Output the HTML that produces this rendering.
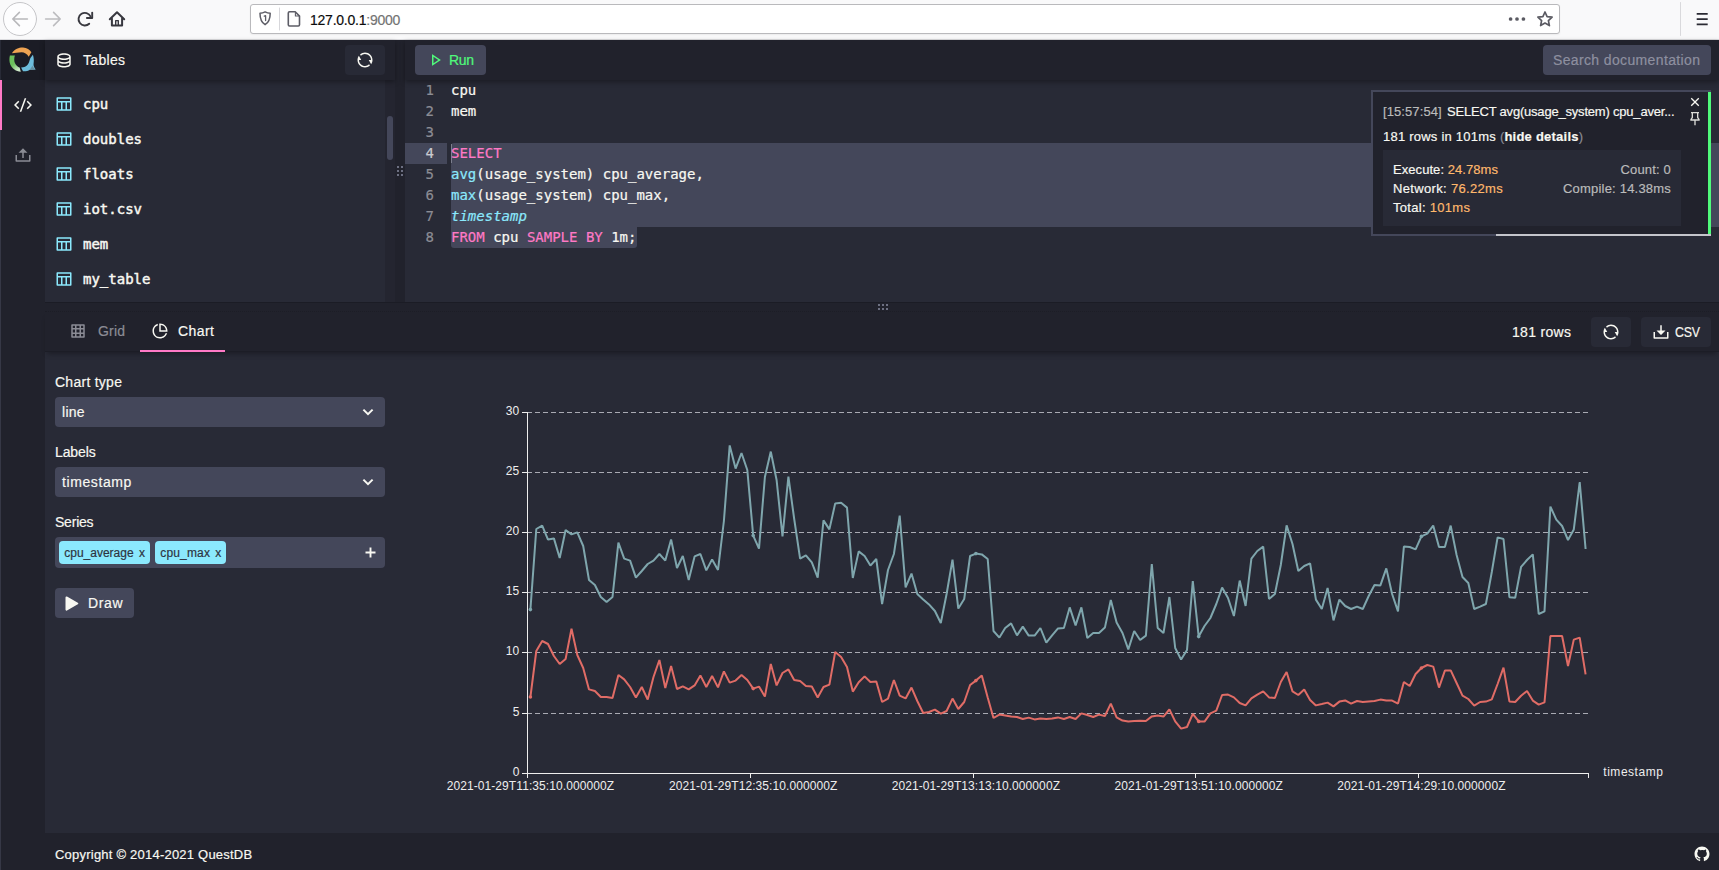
<!DOCTYPE html>
<html lang="en">
<head>
<meta charset="utf-8">
<title>QuestDB · Console</title>
<style>
*{box-sizing:border-box;margin:0;padding:0}
html,body{width:1719px;height:870px;overflow:hidden;background:#282a36}
body{position:relative;font-family:"Liberation Sans",sans-serif;font-size:14px;color:#f8f8f2;letter-spacing:.25px;-webkit-text-stroke:.18px}
.abs{position:absolute}
.mono{font-family:"DejaVu Sans Mono","Liberation Mono",monospace;letter-spacing:0}
svg{display:block;position:absolute;overflow:visible}
/* ---------- browser chrome ---------- */
#chrome{position:absolute;left:0;top:0;width:1719px;height:40px;background:#f9f9fa;border-bottom:1px solid #dcdcdf;color:#0c0c0d;letter-spacing:0}
#urlbar{position:absolute;left:250px;top:4px;width:1310px;height:30px;background:#fff;border:1px solid #b9b9bc;border-radius:3px;box-shadow:0 1px 2px rgba(0,0,0,.06)}
#url{position:absolute;left:310px;top:12px;font-size:14px;line-height:16px;color:#0c0c0d;white-space:nowrap}
#url span{color:#737373}
/* ---------- app frame ---------- */
#sidebar{left:0;top:40px;width:45px;height:830px;background:#21222c}
#logo{left:0;top:40px;width:45px;height:40px;background:#1b1c25}
#navsel{left:0;top:80px;width:2px;height:50px;background:#ff79c6}
#thead{left:45px;top:40px;width:350px;height:40px;background:#21222c;box-shadow:0 2px 5px rgba(0,0,0,.35);z-index:3}
#tlist{left:45px;top:80px;width:340px;height:222px;background:#282a36;overflow:hidden}
#tscroll{left:385px;top:80px;width:10px;height:222px;background:#242530}
#tthumb{left:387px;top:116px;width:6px;height:44px;background:#44475a;border-radius:3px}
#vsplit{left:395px;top:40px;width:10px;height:262px;background:#21222c}
#ehead{left:405px;top:40px;width:1314px;height:40px;background:#21222c;box-shadow:0 2px 5px rgba(0,0,0,.35);z-index:3}
#editor{left:405px;top:80px;width:1314px;height:222px;background:#282a36;overflow:hidden}
#hsplit{left:45px;top:302px;width:1674px;height:10px;background:#21222c}
#tabs{left:45px;top:312px;width:1674px;height:40px;background:#21222c;box-shadow:0 4px 5px -2px rgba(0,0,0,.3),inset 0 -1px 0 #1c1d26;z-index:3}
#result{left:45px;top:352px;width:1674px;height:481px;background:#282a36}
#footer{left:0;top:833px;width:1719px;height:37px;background:#21222c}
#handles i{position:absolute;width:2px;height:2px;background:#6d7082;z-index:4}
.btn{position:absolute;border-radius:4px;background:#282a36}
.trow{position:absolute;left:83px;font-size:14px;line-height:20px;white-space:nowrap;-webkit-text-stroke:.45px #f8f8f2}
.ln{position:absolute;left:405px;width:29px;text-align:right;color:#8c8d95;font-size:14px;line-height:21px}
.cl{position:absolute;left:451px;font-size:14px;line-height:21px;white-space:pre;color:#f8f8f2;-webkit-text-stroke:.2px}
.k{color:#ff79c6}.f{color:#8be9fd}.i{color:#8be9fd;font-style:italic}
.lab{position:absolute;left:55px;font-size:14px;line-height:20px;white-space:nowrap}
.sel{position:absolute;left:55px;width:330px;height:30px;background:#44475a;border-radius:4px}
.sel span{position:absolute;left:7px;top:5px;line-height:20px;font-size:14px}
.tag{position:absolute;top:541px;height:23px;background:#8be9fd;border-radius:4px}
.tagt{position:absolute;top:542px;color:#2d3340;font-size:12px;line-height:22px;white-space:nowrap;letter-spacing:.2px}
</style>
</head>
<body>
<!-- ================= BROWSER CHROME ================= -->
<div id="chrome">
  <div id="urlbar"></div>
  <svg id="chromeicons" style="left:0;top:0" width="1719" height="40" viewBox="0 0 1719 40" fill="none" stroke-linecap="round" stroke-linejoin="round">
    <circle cx="20" cy="19" r="16.5" fill="#fdfdfe" stroke="#c6c6c9" stroke-width="1"/>
    <path d="M27.4 19H12.8M19.4 12.4L12.8 19l6.6 6.6" stroke="#b8b8bb" stroke-width="1.6"/>
    <path d="M45.6 19H60.2M53.6 12.4L60.2 19l-6.6 6.6" stroke="#bcbcbf" stroke-width="1.6"/>
    <path d="M90.5 16.4A6.3 6.3 0 1 0 89.2 23.7" stroke="#38383f" stroke-width="1.9"/>
    <path d="M92.2 12.6V18H86.9" stroke="#38383f" stroke-width="1.9"/>
    <path d="M109.8 19.3L117 12.2l7.2 7.1" stroke="#38383f" stroke-width="2"/>
    <path d="M111.9 18.6V25.6H122.1V18.6" stroke="#38383f" stroke-width="2"/>
    <path d="M115.7 25.4V20.6h2.6v4.8" stroke="#38383f" stroke-width="1.4"/>
    <path d="M260 13.2c1.8 0 3.6-.5 5.100-1.300 1.500.8 3.300 1.300 5.100 1.300 0 5.600-1.600 9.400-5.100 11.500-3.500-2.100-5.100-5.900-5.100-11.500z" stroke="#5d5d66" stroke-width="1.5"/>
    <path d="M264.300 16.200l1.300-.5v4.800" stroke="#5d5d66" stroke-width="1.300"/>
    <path d="M279.500 8V30" stroke="#d7d7db" stroke-width="1"/>
    <path d="M289.500 11.800h5.700l4.300 4.300v8.700a1.200 1.200 0 0 1-1.200 1.200h-8.800a1.200 1.200 0 0 1-1.200-1.200V13a1.200 1.200 0 0 1 1.200-1.200z" stroke="#5d5d66" stroke-width="1.600"/>
    <path d="M295.400 12.200v3.800h3.800" stroke="#5d5d66" stroke-width="1.100"/>
    <g fill="#5a5a62" stroke="none"><circle cx="1510.600" cy="19" r="1.850"/><circle cx="1517" cy="19" r="1.850"/><circle cx="1523.400" cy="19" r="1.850"/></g>
    <path d="M1545 12l2.100 4.600 5 .6-3.700 3.400 1 5-4.400-2.500-4.400 2.500 1-5-3.700-3.400 5-.6z" stroke="#5a5a62" stroke-width="1.700"/>
    <path d="M1680.500 2.500V35.500" stroke="#d9d9dc" stroke-width="1"/>
    <path d="M1696.700 13.800h11M1696.700 19.100h11M1696.700 24.400h11" stroke="#2a2a33" stroke-width="1.700" stroke-linecap="butt"/>
  </svg>
  <div id="url" style="letter-spacing:-0.24px">127.0.0.1<span>:9000</span></div>
</div>

<!-- ================= APP ================= -->
<div class="abs" id="sidebar"></div>
<div class="abs" id="logo"></div>
<svg style="left:0;top:40px;z-index:2" width="45" height="40" viewBox="0 40 45 40">
  <defs><linearGradient id="lg" x1="0" y1="0" x2="0.600" y2="1"><stop offset="0.550" stop-color="#6cc05c"/><stop offset="1" stop-color="#cfe9c9"/></linearGradient></defs>
  <path fill="#eea352" d="M11.900 53.200C14.800 48.800 19.500 47.300 23 47.500c3.800.300 6.900 2.300 8.400 4.700L28.700 56.800C27.100 53.700 24.300 52.300 21.600 52.200c-3.400 0-6.800 1-9.700 1z"/>
  <path fill="url(#lg)" d="M9.900 55.600l5-.2c-.9 2.600-.9 5.600.1 7.800 1 2.100 2.900 3.800 4.600 4.400l1.200 4.200C16 71.500 12 68.500 10.300 64.500 9.200 61.700 9.200 58.500 9.900 55.600z"/>
  <path fill="#6dbddc" d="M32.900 54.700c1 2.800 1.100 6.300.700 8.800-.2 1.500 0 3 2 5.900l-5.600.4c-2 1.200-4.500 1.700-7 1.500l-1.900-3.700c2.900-.2 5.400-1.400 6.700-3.200 1.500-2.100 1.800-4.400 2.600-6.500z"/>
  <path fill="#6790a1" d="M32.300 65.600c.5 1.300 1.600 2.600 3.300 3.800l-6.200.5c1.300-1.100 2.300-2.600 2.900-4.300z"/>
</svg>
<div class="abs" style="left:0;top:130px;width:1px;height:740px;background:#363846;z-index:2"></div>
<div class="abs" style="left:0;top:40px;width:1px;height:40px;background:#282a36;z-index:3"></div>
<div class="abs" id="navsel" style="z-index:3"></div>
<svg style="left:14px;top:96px;z-index:2" width="18" height="18" viewBox="0 0 24 24"><path fill="#f8f8f2" d="M24 12l-5.657 5.657-1.414-1.414L21.172 12l-4.243-4.243 1.414-1.414L24 12zM2.828 12l4.243 4.243-1.414 1.414L0 12l5.657-5.657L7.07 7.757 2.828 12zm6.96 9H7.66l6.552-18h2.128L9.788 21z"/></svg>
<svg style="left:14px;top:146px;z-index:2" width="18" height="18" viewBox="0 0 24 24"><path fill="#8b8c95" d="M4 19h16v-7h2v8a1 1 0 0 1-1 1H3a1 1 0 0 1-1-1v-8h2v7zm9-10v7h-2V9H6l6-6 6 6h-5z"/></svg>

<div class="abs" id="thead">
  <svg style="left:10px;top:11px" width="18" height="18" viewBox="0 0 24 24"><path fill="#f8f8f2" d="M5 12.5c0 .313.461.858 1.53 1.393C7.914 14.585 9.877 15 12 15c2.123 0 4.086-.415 5.47-1.107 1.069-.535 1.53-1.08 1.53-1.393v-2.171C17.35 11.349 14.827 12 12 12s-5.35-.652-7-1.671V12.5zm14 2.829C17.35 16.349 14.827 17 12 17s-5.35-.652-7-1.671V17.5c0 .313.461.858 1.53 1.393C7.914 19.585 9.877 20 12 20c2.123 0 4.086-.415 5.47-1.107 1.069-.535 1.53-1.08 1.53-1.393v-2.171zM3 17.5v-10C3 5.015 7.03 3 12 3s9 2.015 9 4.5v10c0 2.485-4.03 4.5-9 4.5s-9-2.015-9-4.5zm9-7.5c2.123 0 4.086-.415 5.47-1.107C18.539 8.358 19 7.813 19 7.5c0-.313-.461-.858-1.53-1.393C16.086 5.415 14.123 5 12 5c-2.123 0-4.086.415-5.47 1.107C5.461 6.642 5 7.187 5 7.5c0 .313.461.858 1.53 1.393C7.914 9.585 9.877 10 12 10z"/></svg>
  <div class="abs" id="h-tables" style="left:38px;top:10px;line-height:20px;font-size:14px;letter-spacing:0.30px">Tables</div>
  <div class="btn" style="left:300px;top:5px;width:40px;height:30px"></div>
  <svg style="left:311px;top:11px" width="18" height="18" viewBox="0 0 24 24"><path fill="#f8f8f2" d="M5.463 4.433A9.961 9.961 0 0 1 12 2c5.523 0 10 4.477 10 10 0 2.136-.67 4.116-1.81 5.74L17 12h3A8 8 0 0 0 6.46 6.228l-.997-1.795zm13.074 15.134A9.961 9.961 0 0 1 12 22C6.477 22 2 17.523 2 12c0-2.136.67-4.116 1.81-5.74L7 12H4a8 8 0 0 0 13.54 5.772l.997 1.795z"/></svg>
</div>
<div class="abs" id="tlist">
  <svg style="left:9.5px;top:15px" width="18" height="18" viewBox="0 0 24 24"><path fill="#8be9fd" d="M4 8h16V5H4v3zm10 11v-9h-4v9h4zm2 0h4v-9h-4v9zm-8 0v-9H4v9h4zM3 3h18a1 1 0 0 1 1 1v16a1 1 0 0 1-1 1H3a1 1 0 0 1-1-1V4a1 1 0 0 1 1-1z"/></svg>
  <div class="trow mono" style="left:38px;top:14px">cpu</div>
  <svg style="left:9.5px;top:50px" width="18" height="18" viewBox="0 0 24 24"><path fill="#8be9fd" d="M4 8h16V5H4v3zm10 11v-9h-4v9h4zm2 0h4v-9h-4v9zm-8 0v-9H4v9h4zM3 3h18a1 1 0 0 1 1 1v16a1 1 0 0 1-1 1H3a1 1 0 0 1-1-1V4a1 1 0 0 1 1-1z"/></svg>
  <div class="trow mono" style="left:38px;top:49px">doubles</div>
  <svg style="left:9.5px;top:85px" width="18" height="18" viewBox="0 0 24 24"><path fill="#8be9fd" d="M4 8h16V5H4v3zm10 11v-9h-4v9h4zm2 0h4v-9h-4v9zm-8 0v-9H4v9h4zM3 3h18a1 1 0 0 1 1 1v16a1 1 0 0 1-1 1H3a1 1 0 0 1-1-1V4a1 1 0 0 1 1-1z"/></svg>
  <div class="trow mono" style="left:38px;top:84px">floats</div>
  <svg style="left:9.5px;top:120px" width="18" height="18" viewBox="0 0 24 24"><path fill="#8be9fd" d="M4 8h16V5H4v3zm10 11v-9h-4v9h4zm2 0h4v-9h-4v9zm-8 0v-9H4v9h4zM3 3h18a1 1 0 0 1 1 1v16a1 1 0 0 1-1 1H3a1 1 0 0 1-1-1V4a1 1 0 0 1 1-1z"/></svg>
  <div class="trow mono" style="left:38px;top:119px">iot.csv</div>
  <svg style="left:9.5px;top:155px" width="18" height="18" viewBox="0 0 24 24"><path fill="#8be9fd" d="M4 8h16V5H4v3zm10 11v-9h-4v9h4zm2 0h4v-9h-4v9zm-8 0v-9H4v9h4zM3 3h18a1 1 0 0 1 1 1v16a1 1 0 0 1-1 1H3a1 1 0 0 1-1-1V4a1 1 0 0 1 1-1z"/></svg>
  <div class="trow mono" style="left:38px;top:154px">mem</div>
  <svg style="left:9.5px;top:190px" width="18" height="18" viewBox="0 0 24 24"><path fill="#8be9fd" d="M4 8h16V5H4v3zm10 11v-9h-4v9h4zm2 0h4v-9h-4v9zm-8 0v-9H4v9h4zM3 3h18a1 1 0 0 1 1 1v16a1 1 0 0 1-1 1H3a1 1 0 0 1-1-1V4a1 1 0 0 1 1-1z"/></svg>
  <div class="trow mono" style="left:38px;top:189px">my_table</div>
</div>
<div class="abs" id="tscroll"></div>
<div class="abs" id="tthumb"></div>
<div class="abs" id="vsplit"></div>
<div id="handles"><i style="left:397px;top:166px"></i><i style="left:401px;top:166px"></i><i style="left:397px;top:170px"></i><i style="left:401px;top:170px"></i><i style="left:397px;top:174px"></i><i style="left:401px;top:174px"></i><i style="left:878px;top:304px"></i><i style="left:882px;top:304px"></i><i style="left:886px;top:304px"></i><i style="left:878px;top:308px"></i><i style="left:882px;top:308px"></i><i style="left:886px;top:308px"></i></div>

<div class="abs" id="ehead">
  <div class="btn" style="left:10px;top:5px;width:71px;height:30px;background:#44475a"></div>
  <svg style="left:21px;top:11px" width="18" height="18" viewBox="0 0 24 24"><path fill="#50fa7b" d="M16.394 12L10 7.737v8.526L16.394 12zm2.982.416L8.777 19.482A.5.5 0 0 1 8 19.066V4.934a.5.5 0 0 1 .777-.416l10.599 7.066a.5.5 0 0 1 0 .832z"/></svg>
  <div class="abs" id="h-run" style="left:44px;top:10px;line-height:20px;font-size:14px;color:#50fa7b;letter-spacing:-0.35px">Run</div>
  <div class="btn" style="left:1138px;top:5px;width:168px;height:30px;background:#44475a"></div>
  <div class="abs" id="h-search" style="left:1148px;top:10px;line-height:20px;font-size:14px;color:#8e90a0;white-space:nowrap;letter-spacing:0.36px">Search documentation</div>
</div>
<div class="abs" id="editor">
  <div class="abs" style="left:0;top:63px;width:42px;height:21px;background:#44475a"></div>
  <div class="abs" style="left:46px;top:63px;width:1268px;height:84px;background:#44475a;border-radius:3px 0 0 0"></div>
  <div class="abs" style="left:46px;top:147px;width:186px;height:21px;background:#44475a;border-radius:0 0 3px 3px"></div>
  <div class="abs" style="left:46px;top:64px;width:1px;height:19px;background:#7d7f8e"></div>
  <div class="ln mono" style="left:0;top:0px;color:#8c8d95">1</div>
  <div class="cl mono" style="left:46px;top:0px">cpu</div>
  <div class="ln mono" style="left:0;top:21px;color:#8c8d95">2</div>
  <div class="cl mono" style="left:46px;top:21px">mem</div>
  <div class="ln mono" style="left:0;top:42px;color:#8c8d95">3</div>
  <div class="ln mono" style="left:0;top:63px;color:#c9cad0">4</div>
  <div class="cl mono" style="left:46px;top:63px"><span class="k">SELECT</span></div>
  <div class="ln mono" style="left:0;top:84px;color:#8c8d95">5</div>
  <div class="cl mono" style="left:46px;top:84px"><span class="f">avg</span>(usage_system) cpu_average,</div>
  <div class="ln mono" style="left:0;top:105px;color:#8c8d95">6</div>
  <div class="cl mono" style="left:46px;top:105px"><span class="f">max</span>(usage_system) cpu_max,</div>
  <div class="ln mono" style="left:0;top:126px;color:#8c8d95">7</div>
  <div class="cl mono" style="left:46px;top:126px"><span class="i">timestamp</span></div>
  <div class="ln mono" style="left:0;top:147px;color:#8c8d95">8</div>
  <div class="cl mono" style="left:46px;top:147px"><span class="k">FROM</span> cpu <span class="k">SAMPLE</span> <span class="k">BY</span> 1m;</div>
</div>

<!-- ================= NOTIFICATION ================= -->
<div class="abs" id="notif" style="left:1371px;top:90px;width:340px;height:146px;background:#21222c;border:2px solid #44475a;border-right:0;z-index:5;font-size:13px;line-height:19px;letter-spacing:.2px;white-space:nowrap">
  <div class="abs" style="right:0;top:0;width:3px;height:142px;background:#50fa7b"></div>
  <div class="abs" style="left:123px;top:142px;width:215px;height:2px;background:#c4c5cb"></div>
  <div class="abs" id="n-time" style="left:10px;top:10px;color:#bbbbbb;letter-spacing:0.09px">[15:57:54]</div>
  <div class="abs" id="n-query" style="left:74px;top:10px;letter-spacing:-0.20px">SELECT avg(usage_system) cpu_aver...</div>
  <div class="abs" id="n-rows" style="left:10px;top:35px;letter-spacing:0.23px">181 rows in 101ms <span style="color:#8b8c95">(</span><b>hide details</b><span style="color:#8b8c95">)</span></div>
  <div class="abs" style="left:10px;top:58px;width:298px;height:76px;background:#282a36"></div>
  <div class="abs" id="n-ex" style="left:20px;top:68px;letter-spacing:0.06px">Execute: <span style="color:#ffb86c">24.78ms</span></div>
  <div class="abs" id="n-nw" style="left:20px;top:87px;letter-spacing:0.33px">Network: <span style="color:#ffb86c">76.22ms</span></div>
  <div class="abs" id="n-to" style="left:20px;top:106px;letter-spacing:0.29px">Total: <span style="color:#ffb86c">101ms</span></div>
  <div class="abs" id="n-co" style="right:40px;top:68px;color:#bbbbbb;letter-spacing:0.18px">Count: 0</div>
  <div class="abs" id="n-cm" style="right:40px;top:87px;color:#bbbbbb;letter-spacing:0.20px">Compile: 14.38ms</div>
  <svg style="left:314px;top:2px" width="16" height="16" viewBox="0 0 24 24"><path fill="#f8f8f2" d="M12 10.586l4.95-4.95 1.414 1.414-4.95 4.95 4.95 4.95-1.414 1.414-4.95-4.95-4.95 4.95-1.414-1.414 4.95-4.95-4.95-4.95L7.05 5.636z"/></svg>
  <svg style="left:314px;top:17.500px" width="16" height="16" viewBox="0 0 24 24"><path fill="#dcdcd8" d="M18 3v2h-1v6l2 3v2h-6v7h-2v-7H5v-2l2-3V5H6V3h12zM9 5v6.606L7.404 14h9.192L15 11.606V5H9z"/></svg>
</div>
<div class="abs" id="hsplit"></div>
<div class="abs" style="left:45px;top:302px;width:1674px;height:1px;background:#1b1c25"></div>
<div class="abs" style="left:45px;top:311px;width:1674px;height:0;border-top:1px dotted #1c1d26;z-index:4"></div>
<div class="abs" id="tabs">
  <svg style="left:24px;top:10px" width="18" height="18" viewBox="0 0 24 24"><path fill="#8b8c95" d="M14 10h-4v4h4v-4zm2 0v4h3v-4h-3zm-2 9v-3h-4v3h4zm2 0h3v-3h-3v3zM14 5h-4v3h4V5zm2 0v3h3V5h-3zm-8 5H5v4h3v-4zm0 9v-3H5v3h3zM8 5H5v3h3V5zM4 3h16a1 1 0 0 1 1 1v16a1 1 0 0 1-1 1H4a1 1 0 0 1-1-1V4a1 1 0 0 1 1-1z"/></svg>
  <div class="abs" id="t-grid" style="left:53px;top:9px;line-height:20px;font-size:14px;color:#8b8c95;letter-spacing:0.18px">Grid</div>
  <svg style="left:106px;top:10px" width="18" height="18" viewBox="0 0 24 24"><path fill="#f8f8f2" d="M9 2.458v2.124A8.003 8.003 0 0 0 12 20a8.003 8.003 0 0 0 7.419-5h2.123c-1.274 4.057-5.064 7-9.542 7-5.523 0-10-4.477-10-10 0-4.478 2.943-8.268 7-9.542zM12 2c5.523 0 10 4.477 10 10 0 .338-.017.67-.05 1H11V2.05c.329-.033.663-.05 1-.05zm1 2.062V11h6.938A8.004 8.004 0 0 0 13 4.062z"/></svg>
  <div class="abs" id="t-chart" style="left:133px;top:9px;line-height:20px;font-size:14px;letter-spacing:0.44px">Chart</div>
  <div class="abs" style="left:95px;top:38px;width:85px;height:2px;background:#ff79c6"></div>
  <div class="abs" id="t-rows" style="left:1467px;top:10px;line-height:20px;font-size:14px;white-space:nowrap;letter-spacing:0.31px">181 rows</div>
  <div class="btn" style="left:1546px;top:5px;width:40px;height:30px"></div>
  <svg style="left:1557px;top:11px" width="18" height="18" viewBox="0 0 24 24"><path fill="#f8f8f2" d="M5.463 4.433A9.961 9.961 0 0 1 12 2c5.523 0 10 4.477 10 10 0 2.136-.67 4.116-1.81 5.74L17 12h3A8 8 0 0 0 6.46 6.228l-.997-1.795zm13.074 15.134A9.961 9.961 0 0 1 12 22C6.477 22 2 17.523 2 12c0-2.136.67-4.116 1.81-5.74L7 12H4a8 8 0 0 0 13.54 5.772l.997 1.795z"/></svg>
  <div class="btn" style="left:1596px;top:5px;width:70px;height:30px"></div>
  <svg style="left:1607px;top:11px" width="18" height="18" viewBox="0 0 24 24"><path fill="#f8f8f2" d="M13 10h5l-6 6-6-6h5V3h2v7zm-9 9h16v-7h2v8a1 1 0 0 1-1 1H3a1 1 0 0 1-1-1v-8h2v7z"/></svg>
  <div class="abs" id="t-csv" style="left:1630px;top:10px;line-height:20px;font-size:14px;transform:scaleX(.88);transform-origin:0 0;letter-spacing:-0.17px">CSV</div>
</div>
<div class="abs" id="result"></div>
<!-- chart form (page coordinates) -->
<div class="lab" id="l-type" style="top:372px;letter-spacing:0.26px">Chart type</div>
<div class="sel" style="top:397px"><span id="s-line" style="letter-spacing:0.27px">line</span><svg style="left:307px;top:11px" width="12" height="8" viewBox="0 0 12 8"><path d="M1.400 1.600L6 6.200l4.600-4.600" fill="none" stroke="#f8f8f2" stroke-width="2"/></svg></div>
<div class="lab" id="l-labels" style="top:442px;letter-spacing:-0.11px">Labels</div>
<div class="sel" style="top:467px"><span id="s-ts" style="letter-spacing:0.60px">timestamp</span><svg style="left:307px;top:11px" width="12" height="8" viewBox="0 0 12 8"><path d="M1.400 1.600L6 6.200l4.600-4.600" fill="none" stroke="#f8f8f2" stroke-width="2"/></svg></div>
<div class="lab" id="l-series" style="top:512px;letter-spacing:-0.22px">Series</div>
<div class="sel" style="top:537px;height:31px"><svg style="left:309.500px;top:10px" width="11" height="11" viewBox="0 0 11 11"><path d="M5.500 .5v10M.5 5.500h10" fill="none" stroke="#f8f8f2" stroke-width="1.900"/></svg></div>
<div class="tag" style="left:59px;width:91px"></div><div class="tagt" id="tg1" style="left:64.3px;letter-spacing:-0.01px">cpu_average</div><div class="tagt" id="tx1" style="left:139.1px">x</div>
<div class="tag" style="left:155px;width:71px"></div><div class="tagt" id="tg2" style="left:160.3px;letter-spacing:0.15px">cpu_max</div><div class="tagt" id="tx2" style="left:215.2px">x</div>
<div class="btn" style="left:55px;top:588px;width:79px;height:30px;background:#44475a"></div>
<svg style="left:64px;top:594px" width="16" height="19" viewBox="64 594 16 19"><path d="M66.500 597.400L77.300 603.500 66.500 609.600z" fill="#f8f8f2" stroke="#f8f8f2" stroke-width="2" stroke-linejoin="round"/></svg>
<div class="abs" id="b-draw" style="left:88px;top:593px;line-height:20px;font-size:14px;letter-spacing:0.64px">Draw</div>
<!--CHART-->
<svg id="chart" style="left:45px;top:352px" width="1674" height="481" viewBox="45 352 1674 481">
<g stroke="#a9aab3" stroke-width="1" stroke-dasharray="5 3" fill="none">
<path d="M527 713.5H1588.5"/>
<path d="M527 652.5H1588.5"/>
<path d="M527 592.5H1588.5"/>
<path d="M527 532.5H1588.5"/>
<path d="M527 472.5H1588.5"/>
<path d="M527 412.5H1588.5"/>
</g>
<g stroke="#eeeeee" stroke-width="1" fill="none">
<path d="M527.5 412V774"/>
<path d="M527 773.5H1589"/>
<path d="M522 773.5H527.5"/>
<path d="M522 713.5H527.5"/>
<path d="M522 652.5H527.5"/>
<path d="M522 592.5H527.5"/>
<path d="M522 532.5H527.5"/>
<path d="M522 472.5H527.5"/>
<path d="M522 412.5H527.5"/>
<path d="M527.5 773.5V778"/>
<path d="M750.5 773.5V778"/>
<path d="M973.5 773.5V778"/>
<path d="M1195.5 773.5V778"/>
<path d="M1418.5 773.5V778"/>
<path d="M1588.5 773.5V778"/>
</g>
<g fill="#eeeeee" font-family="Liberation Sans, sans-serif" font-size="12" letter-spacing="0.2">
<text x="519.5" y="776.0" text-anchor="end">0</text>
<text x="519.5" y="716.0" text-anchor="end">5</text>
<text x="519.5" y="655.0" text-anchor="end">10</text>
<text x="519.5" y="595.0" text-anchor="end">15</text>
<text x="519.5" y="535.0" text-anchor="end">20</text>
<text x="519.5" y="475.0" text-anchor="end">25</text>
<text x="519.5" y="415.0" text-anchor="end">30</text>
<text x="530.4" y="790" text-anchor="middle" letter-spacing="0.08">2021-01-29T11:35:10.000000Z</text>
<text x="753.2" y="790" text-anchor="middle" letter-spacing="0.08">2021-01-29T12:35:10.000000Z</text>
<text x="975.9" y="790" text-anchor="middle" letter-spacing="0.08">2021-01-29T13:13:10.000000Z</text>
<text x="1198.7" y="790" text-anchor="middle" letter-spacing="0.08">2021-01-29T13:51:10.000000Z</text>
<text x="1421.4" y="790" text-anchor="middle" letter-spacing="0.08">2021-01-29T14:29:10.000000Z</text>
<text x="1603.3" y="776" letter-spacing="0.53">timestamp</text>
</g>
<polyline fill="none" stroke="#7fa6ad" stroke-width="2" stroke-linejoin="bevel" points="530.4,609.6 536.3,529.0 542.2,525.6 548.0,539.6 553.9,538.4 559.7,558.0 565.6,530.0 571.5,534.4 577.3,532.4 583.2,546.0 589.0,580.0 594.9,585.0 600.8,597.0 606.6,602.0 612.5,597.0 618.4,542.6 624.2,558.6 630.1,560.6 635.9,577.6 641.8,571.0 647.7,564.0 653.5,560.6 659.4,554.0 665.3,560.6 671.1,539.4 677.0,568.0 682.8,556.0 688.7,580.0 694.6,556.4 700.4,554.0 706.3,570.4 712.1,559.4 718.0,570.0 723.9,521.0 729.7,445.4 735.6,468.6 741.5,453.0 747.3,470.0 753.2,535.6 759.0,548.6 764.9,477.0 770.8,451.6 776.6,480.0 782.5,536.4 788.4,476.6 794.2,519.0 800.1,558.6 805.9,555.4 811.8,562.4 817.7,577.6 823.5,520.4 829.4,529.4 835.2,503.4 841.1,502.8 847.0,507.6 852.8,578.0 858.7,551.4 864.6,556.0 870.4,565.6 876.3,559.0 882.1,604.0 888.0,570.0 893.9,554.0 899.7,515.6 905.6,587.4 911.5,573.6 917.3,594.0 923.2,599.4 929.0,604.4 934.9,611.0 940.8,623.0 946.6,594.0 952.5,559.6 958.3,608.6 964.2,599.0 970.1,556.0 975.9,553.6 981.8,554.4 987.7,559.0 993.5,631.0 999.4,637.6 1005.2,628.0 1011.1,623.4 1017.0,635.4 1022.8,626.6 1028.7,635.6 1034.6,635.6 1040.4,628.0 1046.3,642.6 1052.1,635.4 1058.0,628.4 1063.9,628.0 1069.7,607.4 1075.6,625.4 1081.4,607.4 1087.3,638.0 1093.2,633.0 1099.0,633.0 1104.9,627.6 1110.8,600.0 1116.6,622.6 1122.5,633.0 1128.3,649.4 1134.2,631.0 1140.1,640.0 1145.9,635.6 1151.8,564.0 1157.7,628.0 1163.5,633.0 1169.4,597.0 1175.2,648.0 1181.1,659.6 1187.0,650.0 1192.8,581.0 1198.7,636.6 1204.5,626.0 1210.4,618.0 1216.3,604.0 1222.1,587.6 1228.0,598.0 1233.9,616.0 1239.7,580.6 1245.6,606.0 1251.4,558.6 1257.3,551.0 1263.2,546.6 1269.0,599.0 1274.9,594.0 1280.8,565.0 1286.6,525.4 1292.5,544.0 1298.3,571.0 1304.2,566.0 1310.1,563.4 1315.9,599.6 1321.8,609.0 1327.6,588.0 1333.5,620.4 1339.4,599.6 1345.2,606.0 1351.1,609.0 1357.0,606.6 1362.8,609.0 1368.7,596.0 1374.5,585.0 1380.4,585.4 1386.3,568.4 1392.1,594.0 1398.0,611.4 1403.9,546.6 1409.7,547.0 1415.6,549.4 1421.4,536.4 1427.3,533.6 1433.2,525.6 1439.0,547.0 1444.9,547.0 1450.7,525.6 1456.6,555.0 1462.5,577.0 1468.3,583.0 1474.2,609.0 1480.1,606.6 1485.9,604.0 1491.8,572.0 1497.6,537.4 1503.5,539.0 1509.4,597.2 1515.2,597.8 1521.1,566.8 1527.0,560.0 1532.8,554.4 1538.7,614.0 1544.5,611.4 1550.4,506.6 1556.3,519.6 1562.1,526.0 1568.0,540.0 1573.8,529.4 1579.7,482.0 1585.6,549.0"/>
<polyline fill="none" stroke="#e06c66" stroke-width="2" stroke-linejoin="bevel" points="530.4,697.0 536.3,651.0 542.2,641.0 548.0,644.0 553.9,656.0 559.7,664.0 565.6,659.0 571.5,628.6 577.3,655.0 583.2,668.0 589.0,689.4 594.9,691.0 600.8,697.0 606.6,697.0 612.5,698.0 618.4,675.0 624.2,679.4 630.1,687.0 635.9,697.6 641.8,687.0 647.7,699.6 653.5,677.0 659.4,660.0 665.3,688.0 671.1,666.0 677.0,689.0 682.8,686.4 688.7,689.4 694.6,685.4 700.4,675.4 706.3,687.0 712.1,676.0 718.0,687.4 723.9,671.4 729.7,682.6 735.6,680.6 741.5,675.0 747.3,680.0 753.2,688.6 759.0,686.6 764.9,696.6 770.8,664.0 776.6,685.4 782.5,673.0 788.4,669.4 794.2,680.0 800.1,681.0 805.9,686.0 811.8,686.6 817.7,697.4 823.5,687.0 829.4,684.6 835.2,652.0 841.1,657.0 847.0,667.0 852.8,691.6 858.7,682.2 864.6,676.4 870.4,682.0 876.3,681.6 882.1,702.0 888.0,698.6 893.9,680.0 899.7,695.6 905.6,698.4 911.5,687.6 917.3,701.0 923.2,713.0 929.0,712.0 934.9,709.6 940.8,713.6 946.6,711.0 952.5,698.6 958.3,709.0 964.2,702.0 970.1,685.0 975.9,680.6 981.8,675.4 987.7,697.4 993.5,718.0 999.4,714.6 1005.2,715.4 1011.1,716.4 1017.0,717.0 1022.8,719.0 1028.7,717.6 1034.6,719.4 1040.4,718.6 1046.3,719.0 1052.1,718.4 1058.0,717.4 1063.9,719.0 1069.7,717.0 1075.6,719.0 1081.4,713.4 1087.3,715.0 1093.2,717.0 1099.0,714.6 1104.9,716.0 1110.8,703.6 1116.6,717.4 1122.5,720.6 1128.3,721.6 1134.2,721.0 1140.1,720.8 1145.9,721.0 1151.8,716.4 1157.7,715.6 1163.5,716.6 1169.4,709.4 1175.2,721.4 1181.1,728.6 1187.0,727.0 1192.8,713.8 1198.7,721.4 1204.5,721.6 1210.4,713.4 1216.3,710.6 1222.1,695.0 1228.0,694.6 1233.9,697.4 1239.7,703.0 1245.6,705.4 1251.4,698.4 1257.3,694.6 1263.2,691.4 1269.0,697.4 1274.9,698.0 1280.8,682.0 1286.6,672.0 1292.5,691.4 1298.3,695.0 1304.2,689.6 1310.1,700.0 1315.9,705.4 1321.8,704.0 1327.6,702.6 1333.5,706.4 1339.4,701.6 1345.2,700.4 1351.1,703.6 1357.0,701.0 1362.8,702.0 1368.7,701.4 1374.5,701.0 1380.4,699.6 1386.3,700.6 1392.1,700.6 1398.0,703.6 1403.9,682.0 1409.7,686.0 1415.6,674.0 1421.4,668.0 1427.3,665.0 1433.2,666.6 1439.0,687.6 1444.9,670.6 1450.7,670.4 1456.6,683.0 1462.5,695.6 1468.3,699.0 1474.2,705.6 1480.1,702.0 1485.9,701.6 1491.8,699.4 1497.6,684.0 1503.5,667.6 1509.4,701.4 1515.2,702.0 1521.1,695.8 1527.0,691.0 1532.8,700.6 1538.7,704.6 1544.5,702.4 1550.4,636.0 1556.3,636.0 1562.1,636.0 1568.0,666.0 1573.8,639.6 1579.7,637.6 1585.6,674.4"/>
<circle cx="530.4" cy="609.6" r="1.8" fill="#7fa6ad"/>
<circle cx="530.4" cy="697.0" r="1.8" fill="#e06c66"/>
<circle cx="753.2" cy="535.6" r="1.8" fill="#7fa6ad"/>
<circle cx="753.2" cy="688.6" r="1.8" fill="#e06c66"/>
<circle cx="975.9" cy="553.6" r="1.8" fill="#7fa6ad"/>
<circle cx="975.9" cy="680.6" r="1.8" fill="#e06c66"/>
<circle cx="1198.7" cy="636.6" r="1.8" fill="#7fa6ad"/>
<circle cx="1198.7" cy="721.4" r="1.8" fill="#e06c66"/>
<circle cx="1421.4" cy="536.4" r="1.8" fill="#7fa6ad"/>
<circle cx="1421.4" cy="668.0" r="1.8" fill="#e06c66"/>
</svg>
<!--/CHART-->
<div class="abs" id="footer">
  <div class="abs" id="foot" style="left:55px;top:12px;font-size:13px;line-height:20px;white-space:nowrap;letter-spacing:0.22px">Copyright © 2014-2021 QuestDB</div>
  <svg style="left:1693px;top:12px" width="18" height="18" viewBox="0 0 24 24"><path fill="#f8f8f2" d="M12 2C6.475 2 2 6.475 2 12a9.994 9.994 0 0 0 6.838 9.488c.5.087.687-.213.687-.476 0-.237-.013-1.024-.013-1.862-2.512.463-3.162-.612-3.362-1.175-.113-.288-.6-1.175-1.025-1.413-.35-.187-.85-.65-.013-.662.788-.013 1.35.725 1.538 1.025.9 1.512 2.338 1.087 2.912.825.088-.65.35-1.087.638-1.337-2.225-.25-4.55-1.113-4.55-4.938 0-1.088.387-1.987 1.025-2.688-.1-.25-.45-1.275.1-2.65 0 0 .837-.262 2.75 1.026a9.28 9.28 0 0 1 2.5-.338c.85 0 1.7.112 2.5.337 1.912-1.3 2.75-1.024 2.75-1.024.55 1.375.2 2.4.1 2.65.637.7 1.025 1.587 1.025 2.687 0 3.838-2.337 4.688-4.562 4.938.362.312.675.912.675 1.85 0 1.337-.013 2.412-.013 2.75 0 .262.188.574.688.474A10.016 10.016 0 0 0 22 12c0-5.525-4.475-10-10-10z"/></svg>
</div>
</body>
</html>
